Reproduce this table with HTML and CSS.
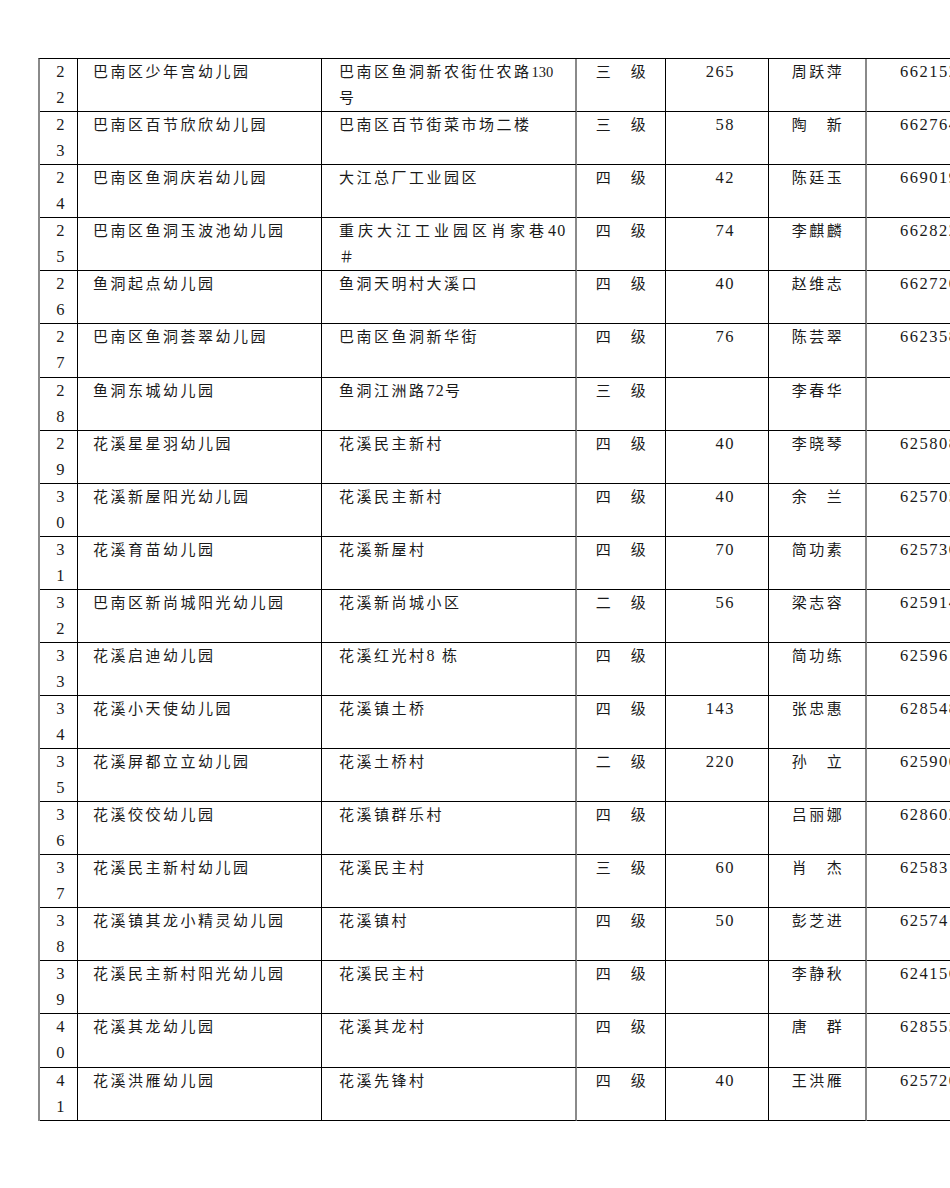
FILE: index.html
```html
<!DOCTYPE html>
<html lang="zh-CN">
<head>
<meta charset="utf-8">
<title>幼儿园名录</title>
<link rel="stylesheet" href="styles.css">
</head>
<body>
<div class="page">
<table class="list">
<colgroup>
<col class="w1"><col class="w2"><col class="w3"><col class="w4"><col class="w5"><col class="w6"><col class="w7">
</colgroup>
<tbody>
<tr><td class="no">2<br>2</td><td class="name">巴南区少年宫幼儿园</td><td class="addr">巴南区鱼洞新农街仕农路<span class="tight">130</span><br>号</td><td class="grade">三　级</td><td class="cnt">265</td><td class="who">周跃萍</td><td class="tel">662152</td></tr>
<tr><td class="no">2<br>3</td><td class="name">巴南区百节欣欣幼儿园</td><td class="addr">巴南区百节街菜市场二楼</td><td class="grade">三　级</td><td class="cnt">58</td><td class="who">陶　新</td><td class="tel">662764</td></tr>
<tr><td class="no">2<br>4</td><td class="name">巴南区鱼洞庆岩幼儿园</td><td class="addr">大江总厂工业园区</td><td class="grade">四　级</td><td class="cnt">42</td><td class="who">陈廷玉</td><td class="tel">669019</td></tr>
<tr><td class="no">2<br>5</td><td class="name">巴南区鱼洞玉波池幼儿园</td><td class="addr"><span class="wide">重庆大江工业园区肖家巷</span><span class="num">40</span><br>＃</td><td class="grade">四　级</td><td class="cnt">74</td><td class="who">李麒麟</td><td class="tel">662822</td></tr>
<tr><td class="no">2<br>6</td><td class="name">鱼洞起点幼儿园</td><td class="addr">鱼洞天明村大溪口</td><td class="grade">四　级</td><td class="cnt">40</td><td class="who">赵维志</td><td class="tel">662720</td></tr>
<tr class="tall"><td class="no">2<br>7</td><td class="name">巴南区鱼洞荟翠幼儿园</td><td class="addr">巴南区鱼洞新华街</td><td class="grade">四　级</td><td class="cnt">76</td><td class="who">陈芸翠</td><td class="tel">662358</td></tr>
<tr><td class="no">2<br>8</td><td class="name">鱼洞东城幼儿园</td><td class="addr">鱼洞江洲路<span class="num">72</span>号</td><td class="grade">三　级</td><td class="cnt"></td><td class="who">李春华</td><td class="tel"></td></tr>
<tr><td class="no">2<br>9</td><td class="name">花溪星星羽幼儿园</td><td class="addr">花溪民主新村</td><td class="grade">四　级</td><td class="cnt">40</td><td class="who">李晓琴</td><td class="tel">625808</td></tr>
<tr><td class="no">3<br>0</td><td class="name">花溪新屋阳光幼儿园</td><td class="addr">花溪民主新村</td><td class="grade">四　级</td><td class="cnt">40</td><td class="who">余　兰</td><td class="tel">625705</td></tr>
<tr><td class="no">3<br>1</td><td class="name">花溪育苗幼儿园</td><td class="addr">花溪新屋村</td><td class="grade">四　级</td><td class="cnt">70</td><td class="who">简功素</td><td class="tel">625730</td></tr>
<tr><td class="no">3<br>2</td><td class="name">巴南区新尚城阳光幼儿园</td><td class="addr">花溪新尚城小区</td><td class="grade">二　级</td><td class="cnt">56</td><td class="who">梁志容</td><td class="tel">625914</td></tr>
<tr><td class="no">3<br>3</td><td class="name">花溪启迪幼儿园</td><td class="addr">花溪红光村<span class="num">8</span> 栋</td><td class="grade">四　级</td><td class="cnt"></td><td class="who">简功练</td><td class="tel">625961</td></tr>
<tr><td class="no">3<br>4</td><td class="name">花溪小天使幼儿园</td><td class="addr">花溪镇土桥</td><td class="grade">四　级</td><td class="cnt">143</td><td class="who">张忠惠</td><td class="tel">628548</td></tr>
<tr><td class="no">3<br>5</td><td class="name">花溪屏都立立幼儿园</td><td class="addr">花溪土桥村</td><td class="grade">二　级</td><td class="cnt">220</td><td class="who">孙　立</td><td class="tel">625900</td></tr>
<tr><td class="no">3<br>6</td><td class="name">花溪佼佼幼儿园</td><td class="addr">花溪镇群乐村</td><td class="grade">四　级</td><td class="cnt"></td><td class="who">吕丽娜</td><td class="tel">628602</td></tr>
<tr><td class="no">3<br>7</td><td class="name">花溪民主新村幼儿园</td><td class="addr">花溪民主村</td><td class="grade">三　级</td><td class="cnt">60</td><td class="who">肖　杰</td><td class="tel">625831</td></tr>
<tr><td class="no">3<br>8</td><td class="name">花溪镇其龙小精灵幼儿园</td><td class="addr">花溪镇村</td><td class="grade">四　级</td><td class="cnt">50</td><td class="who">彭芝进</td><td class="tel">625741</td></tr>
<tr><td class="no">3<br>9</td><td class="name">花溪民主新村阳光幼儿园</td><td class="addr">花溪民主村</td><td class="grade">四　级</td><td class="cnt"></td><td class="who">李静秋</td><td class="tel">624156</td></tr>
<tr class="tall"><td class="no">4<br>0</td><td class="name">花溪其龙幼儿园</td><td class="addr">花溪其龙村</td><td class="grade">四　级</td><td class="cnt"></td><td class="who">唐　群</td><td class="tel">628555</td></tr>
<tr><td class="no">4<br>1</td><td class="name">花溪洪雁幼儿园</td><td class="addr">花溪先锋村</td><td class="grade">四　级</td><td class="cnt">40</td><td class="who">王洪雁</td><td class="tel">625720</td></tr>
</tbody>
</table>
</div>
</body>
</html>
```
FILE: styles.css
```css
html, body {
  margin: 0;
  padding: 0;
  background: #fff;
  overflow: hidden;
}
.page {
  width: 950px;
  height: 1188px;
  overflow: hidden;
  padding: 58px 0 0 38px;
  box-sizing: border-box;
}
.list {
  border-collapse: separate;
  border-spacing: 0;
  table-layout: fixed;
  width: 952px;
  border-top: 1px solid #000;
  border-left: 2px solid #8a8a8a;
  font-family: "Liberation Serif", "Noto Sans CJK SC", serif;
  font-size: 15px;
  letter-spacing: 2.5px;
  line-height: 26px;
  color: #1a1a1a;
}
.w1 { width: 38px; }
.w2 { width: 244px; }
.w3 { width: 255px; }
.w4 { width: 89px; }
.w5 { width: 103px; }
.w6 { width: 98px; }
.w7 { width: 123px; }
.list tr { height: 53px; }
.list tr.tall { height: 54px; }
.list td {
  border-right: 1px solid #000;
  border-bottom: 1px solid #000;
  padding: 0;
  vertical-align: top;
  white-space: nowrap;
  overflow: hidden;
}
.list td.addr,
.list td.who {
  border-right: 2px solid #8a8a8a;
}
.no {
  text-align: center;
  padding-left: 5px !important;
  font-size: 16.5px;
  letter-spacing: 1.5px;
}
.name { padding-left: 15px !important; }
.addr { padding-left: 17px !important; }
.grade { text-align: center; padding-left: 2px !important; }
.cnt {
  text-align: right;
  padding-right: 33px !important;
  font-size: 16.5px;
  letter-spacing: 1.5px;
}
.who { text-align: center; padding-left: 2px !important; }
.tel {
  padding-left: 33px !important;
  font-size: 16.5px;
  letter-spacing: 1.5px;
}
.num { font-size: 16px; letter-spacing: 1.2px; }
.tight { letter-spacing: 0; font-size: 14.5px; }
.wide { letter-spacing: 4px; }
```
